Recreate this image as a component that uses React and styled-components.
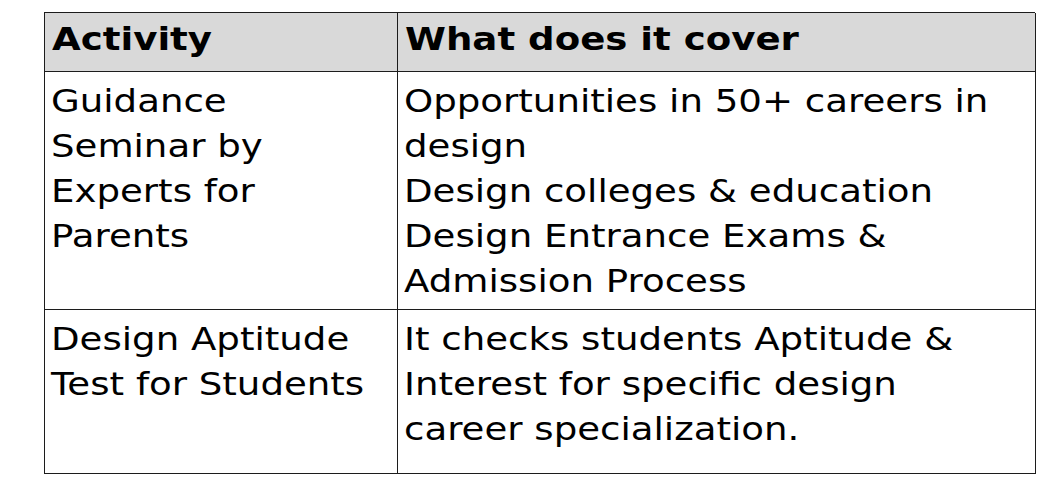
import React from "react";
import styled, { createGlobalStyle } from "styled-components";

const GlobalStyle = createGlobalStyle`
  html, body {
    margin: 0;
    padding: 0;
    background: #ffffff;
  }
  body {
    font-family: "DejaVu Sans", Verdana, sans-serif;
    color: #000;
  }
`;

const Page = styled.div`
  padding: 12px 0 0 44px;
`;

const Grid = styled.div`
  display: grid;
  grid-template-columns: 353px 638px;
  grid-template-rows: 59px 238px 164px;
  width: 991px;
  box-sizing: border-box;
  border-top: 1px solid #1c1c1c;
  border-left: 1px solid #1c1c1c;
`;

const Cell = styled.div`
  box-sizing: border-box;
  border-right: 1px solid #1c1c1c;
  border-bottom: 1px solid #1c1c1c;
  background: ${(p) => (p.$head ? "#d9d9d9" : "#ffffff")};
  padding: ${(p) => (p.$head ? "4px 0 0 7px" : "7px 0 0 6px")};
  overflow: hidden;
`;

const Lines = styled.div`
  transform: scaleX(1.16);
  transform-origin: left top;
  font-size: 32px;
  line-height: 45px;
  font-weight: ${(p) => (p.$bold ? 700 : 400)};
`;

const Line = styled.div`
  white-space: nowrap;
`;

const rows = [
  {
    activity: ["Guidance", "Seminar by", "Experts for", "Parents"],
    cover: [
      "Opportunities in 50+ careers in",
      "design",
      "Design colleges & education",
      "Design Entrance Exams &",
      "Admission Process",
    ],
  },
  {
    activity: ["Design Aptitude", "Test for Students"],
    cover: [
      "It checks students Aptitude &",
      "Interest for specific design",
      "career specialization.",
    ],
  },
];

function TextBlock({ lines, bold }) {
  return (
    <Lines $bold={bold}>
      {lines.map((l, i) => (
        <Line key={i}>{l}</Line>
      ))}
    </Lines>
  );
}

export default function App() {
  return (
    <>
      <GlobalStyle />
      <Page>
        <Grid>
          <Cell $head>
            <TextBlock bold lines={["Activity"]} />
          </Cell>
          <Cell $head>
            <TextBlock bold lines={["What does it cover"]} />
          </Cell>
          {rows.map((r, i) => (
            <React.Fragment key={i}>
              <Cell>
                <TextBlock lines={r.activity} />
              </Cell>
              <Cell>
                <TextBlock lines={r.cover} />
              </Cell>
            </React.Fragment>
          ))}
        </Grid>
      </Page>
    </>
  );
}
